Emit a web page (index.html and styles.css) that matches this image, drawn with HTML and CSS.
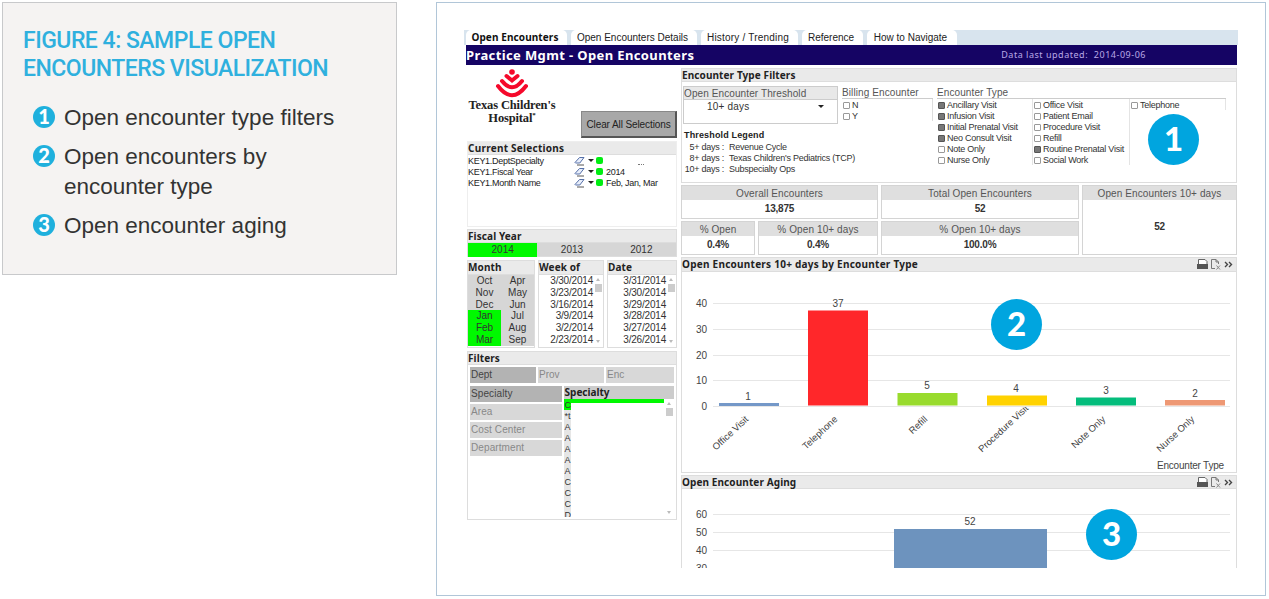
FILE: index.html
```
<!DOCTYPE html>
<html lang="en">
<head>
    <meta charset="UTF-8">
    <meta name="viewport" content="width=device-width, initial-scale=1.0">
    <title>Sample Open Encounters Visualization</title>
    <link rel="stylesheet" href="styles.css">
</head>
<body>
    <aside class="caption">
        <h1>Figure 4: Sample Open<br>Encounters Visualization</h1>
        <ol class="legend">
            <li><span class="dot">1</span><span>Open encounter type filters</span></li>
            <li><span class="dot">2</span><span>Open encounters by<br>encounter type</span></li>
            <li><span class="dot">3</span><span>Open encounter aging</span></li>
        </ol>
    </aside>

    <main class="frame">
        <div class="dashboard">
            <nav class="tabs">
                <span class="tab active">Open Encounters</span>
                <span class="tab details">Open Encounters Details</span>
                <span class="tab history">History / Trending</span>
                <span class="tab reference">Reference</span>
                <span class="tab navigate">How to Navigate</span>
            </nav>
            <header class="title-bar">
                <span class="title">Practice Mgmt - Open Encounters</span>
                <span class="updated">Data last updated:&nbsp; 2014-09-06</span>
            </header>

            <div class="columns">
                <!-- Left column -->
                <div class="side">
                    <div class="brand">
                        <div class="logo">
                            <svg width="34" height="29" viewBox="0 0 34 29" fill="none" stroke="#f5092b" stroke-width="4" stroke-linecap="round">
                                <circle cx="17" cy="3" r="2.8" fill="#f5092b" stroke="none"/>
                                <path d="M11.500 7L17 11.500L22.500 7"/>
                                <path d="M7 12Q17 24.500 27 12"/>
                                <path d="M3 17Q17 35.500 31 17"/>
                            </svg>
                            <div class="logo-text">Texas Children's<br>Hospital<sup>*</sup></div>
                        </div>
                        <button class="clear-button">Clear All Selections</button>
                    </div>

                    <section class="panel selections">
                        <h2>Current Selections</h2>
                        <div class="selection">
                            <span>KEY1.DeptSpecialty</span>
                            <svg class="eraser" width="12" height="10" viewBox="0 0 12 10"><path d="M1 6.500L5.500 1.500H10L5.800 7H1.500Z" fill="#e8eefb" stroke="#5670a8"/><path d="M3 9H10" stroke="#555"/></svg>
                            <i class="caret"></i><i class="green"></i><span></span>
                        </div>
                        <div class="selection">
                            <span>KEY1.Fiscal Year</span>
                            <svg class="eraser" width="12" height="10" viewBox="0 0 12 10"><path d="M1 6.500L5.500 1.500H10L5.800 7H1.500Z" fill="#e8eefb" stroke="#5670a8"/><path d="M3 9H10" stroke="#555"/></svg>
                            <i class="caret"></i><i class="green"></i><span>2014</span>
                        </div>
                        <div class="selection">
                            <span>KEY1.Month Name</span>
                            <svg class="eraser" width="12" height="10" viewBox="0 0 12 10"><path d="M1 6.500L5.500 1.500H10L5.800 7H1.500Z" fill="#e8eefb" stroke="#5670a8"/><path d="M3 9H10" stroke="#555"/></svg>
                            <i class="caret"></i><i class="green"></i><span>Feb, Jan, Mar</span>
                        </div>
                        <div class="specks"></div>
                    </section>

                    <section class="panel fiscal">
                        <h2>Fiscal Year</h2>
                        <div class="years"><span class="on">2014</span><span>2013</span><span>2012</span></div>
                    </section>

                    <div class="dates">
                        <section class="panel month">
                            <h2>Month</h2>
                            <div class="months">
                                <span>Oct</span><span>Apr</span>
                                <span>Nov</span><span>May</span>
                                <span>Dec</span><span>Jun</span>
                                <span class="on">Jan</span><span>Jul</span>
                                <span class="on">Feb</span><span>Aug</span>
                                <span class="on">Mar</span><span>Sep</span>
                            </div>
                        </section>
                        <section class="panel">
                            <h2>Week of</h2>
                            <div class="scroll-list">
                                <div class="days">3/30/2014<br>3/23/2014<br>3/16/2014<br>3/9/2014<br>3/2/2014<br>2/23/2014</div>
                                <div class="scrollbar"><i class="up"></i><i class="thumb"></i><i class="down"></i></div>
                            </div>
                        </section>
                        <section class="panel">
                            <h2>Date</h2>
                            <div class="scroll-list">
                                <div class="days">3/31/2014<br>3/30/2014<br>3/29/2014<br>3/28/2014<br>3/27/2014<br>3/26/2014</div>
                                <div class="scrollbar"><i class="up"></i><i class="thumb"></i><i class="down"></i></div>
                            </div>
                        </section>
                    </div>

                    <section class="panel filters">
                        <h2>Filters</h2>
                        <div class="filter-tabs"><span class="picked">Dept</span><span>Prov</span><span>Enc</span></div>
                        <div class="filter-body">
                            <div class="filter-list">
                                <span class="picked">Specialty</span><span>Area</span><span>Cost Center</span><span>Department</span>
                            </div>
                            <div class="specialty">
                                <h3>Specialty</h3>
                                <div class="scroll-list">
                                    <div class="letters"><b class="on">C</b><b>*t</b><b>A</b><b>A</b><b>A</b><b>A</b><b>A</b><b>C</b><b>C</b><b>C</b><b>D</b></div>
                                    <div class="selected-edge"></div>
                                    <div class="scrollbar"><i class="up"></i><i class="thumb"></i><i class="down"></i></div>
                                </div>
                            </div>
                        </div>
                    </section>
                </div>

                <!-- Right column -->
                <div class="content">
                    <section class="panel type-filters">
                        <h2>Encounter Type Filters</h2>
                        <div class="filter-row">
                            <div class="threshold-col">
                                <div class="threshold">
                                    <h3>Open Encounter Threshold</h3>
                                    <div class="select"><span>10+ days</span><i class="caret"></i></div>
                                </div>
                                <h4>Threshold Legend</h4>
                                <dl>
                                    <dt>5+ days :</dt><dd>Revenue Cycle</dd>
                                    <dt>8+ days :</dt><dd>Texas Children's Pediatrics (TCP)</dd>
                                    <dt>10+ days :</dt><dd>Subspecialty Ops</dd>
                                </dl>
                            </div>
                            <div class="billing">
                                <h3>Billing Encounter</h3>
                                <ul class="checks"><li>N</li><li>Y</li></ul>
                            </div>
                            <div class="types">
                                <h3>Encounter Type</h3>
                                <div class="type-cols">
                                    <ul class="checks">
                                        <li class="checked">Ancillary Visit</li>
                                        <li class="checked">Infusion Visit</li>
                                        <li class="checked">Initial Prenatal Visit</li>
                                        <li class="checked">Neo Consult Visit</li>
                                        <li>Note Only</li>
                                        <li>Nurse Only</li>
                                    </ul>
                                    <ul class="checks">
                                        <li>Office Visit</li>
                                        <li>Patient Email</li>
                                        <li>Procedure Visit</li>
                                        <li>Refill</li>
                                        <li class="checked">Routine Prenatal Visit</li>
                                        <li>Social Work</li>
                                    </ul>
                                    <ul class="checks"><li>Telephone</li></ul>
                                </div>
                            </div>
                        </div>
                        <span class="badge badge-1">1</span>
                    </section>

                    <div class="kpis">
                        <div class="kpi span-2"><h3>Overall Encounters</h3><b>13,875</b></div>
                        <div class="kpi"><h3>Total Open Encounters</h3><b>52</b></div>
                        <div class="kpi tall"><h3>Open Encounters 10+ days</h3><b>52</b></div>
                        <div class="kpi"><h3>% Open</h3><b>0.4%</b></div>
                        <div class="kpi"><h3>% Open 10+ days</h3><b>0.4%</b></div>
                        <div class="kpi"><h3>% Open 10+ days</h3><b>100.0%</b></div>
                    </div>

                    <section class="panel by-type">
                        <h2>Open Encounters 10+ days by Encounter Type
                            <svg class="tools" width="38" height="12" viewBox="0 0 38 12"><path d="M2.500 6V1.500H9L11 3.500V6" fill="#fff" stroke="#666"/><path d="M1 6H12V11H1Z" fill="#555"/><path d="M19 10.500H15.500V1.500H20L22.500 4V6M20 1.500V4H22.500" fill="none" stroke="#777"/><path d="M20.500 7.500L24 11.500M24 7.500L20.500 11.500" stroke="#888"/><path d="M29 4L31.500 6.500L29 9M33 4L35.500 6.500L33 9" fill="none" stroke="#444" stroke-width="1.400"/></svg>
                        </h2>
                        <svg class="chart" width="554" height="200" viewBox="0 0 554 200">
                            <clipPath id="below-axis"><rect x="0" y="135" width="554" height="65"/></clipPath>
                            <path class="grid" d="M31 31.500H548M31 57.500H548M31 83.500H548M31 108.500H548M31 134.500H548"/>
                            <g class="axis">
                                <text x="25" y="35">40</text>
                                <text x="25" y="61">30</text>
                                <text x="25" y="87">20</text>
                                <text x="25" y="112">10</text>
                                <text x="25" y="138">0</text>
                            </g>
                            <rect x="37" y="131" width="60" height="3" fill="#7498c8"/>
                            <rect x="126" y="38.500" width="60" height="95" fill="#ff272a"/>
                            <rect x="215.500" y="121" width="60" height="12.500" fill="#99db2d"/>
                            <rect x="305" y="123.500" width="60" height="10" fill="#ffd200"/>
                            <rect x="394" y="125.500" width="60" height="8" fill="#04bd7c"/>
                            <rect x="483" y="128" width="60" height="5.500" fill="#ee9874"/>
                            <g class="values">
                                <text x="66" y="128">1</text>
                                <text x="156" y="35">37</text>
                                <text x="245" y="117">5</text>
                                <text x="334" y="120">4</text>
                                <text x="424" y="122">3</text>
                                <text x="513" y="125">2</text>
                            </g>
                            <g class="labels" clip-path="url(#below-axis)">
                                <text transform="translate(67 148) rotate(-43)">Office Visit</text>
                                <text transform="translate(156 148) rotate(-43)">Telephone</text>
                                <text transform="translate(246 148) rotate(-43)">Refill</text>
                                <text transform="translate(347 137) rotate(-43)">Procedure Visit</text>
                                <text transform="translate(424 148) rotate(-43)">Note Only</text>
                                <text transform="translate(513 148) rotate(-43)">Nurse Only</text>
                            </g>
                            <text class="axis-title" x="542" y="197">Encounter Type</text>
                        </svg>
                        <span class="badge badge-2">2</span>
                    </section>

                    <section class="panel aging">
                        <h2>Open Encounter Aging
                            <svg class="tools" width="38" height="12" viewBox="0 0 38 12"><path d="M2.500 6V1.500H9L11 3.500V6" fill="#fff" stroke="#666"/><path d="M1 6H12V11H1Z" fill="#555"/><path d="M19 10.500H15.500V1.500H20L22.500 4V6M20 1.500V4H22.500" fill="none" stroke="#777"/><path d="M20.500 7.500L24 11.500M24 7.500L20.500 11.500" stroke="#888"/><path d="M29 4L31.500 6.500L29 9M33 4L35.500 6.500L33 9" fill="none" stroke="#444" stroke-width="1.400"/></svg>
                        </h2>
                        <svg class="chart" width="554" height="90" viewBox="0 0 554 90">
                            <path class="grid" d="M31 25.500H548M31 43.500H548M31 61.500H548"/>
                            <g class="axis">
                                <text x="25" y="29">60</text>
                                <text x="25" y="47">50</text>
                                <text x="25" y="65">40</text>
                                <text x="25" y="83">30</text>
                            </g>
                            <rect x="212" y="40" width="153" height="50" fill="#6d93be"/>
                            <g class="values"><text x="288" y="36">52</text></g>
                        </svg>
                        <span class="badge badge-3">3</span>
                    </section>
                </div>
            </div>
        </div>
    </main>
</body>
</html>
```
FILE: styles.css
```
*, *::before {
    box-sizing: border-box;
}

body {
    margin: 0;
    padding: 2px;
    display: flex;
    align-items: flex-start;
    gap: 39px;
    background: white;
    font-family: "Liberation Sans", Arial, sans-serif;
    color: #333;
}

h1, h2, h3, h4, ul, ol, dl, dd {
    margin: 0;
    padding: 0;
    font-weight: normal;
    list-style: none;
}

/* Caption card */
.caption {
    width: 395px;
    height: 273px;
    padding: 24px 20px;
    background: #f5f3f2;
    border: 1px solid #c8c9cb;
}

.caption h1 {
    font-family: Roboto, sans-serif;
    font-size: 23px;
    font-weight: 500;
    line-height: 28px;
    letter-spacing: -0.5px;
    white-space: nowrap;
    text-transform: uppercase;
    color: #2fb0de;
}

.legend {
    margin-top: 20px;
    padding-left: 10px;
    font-size: 22.5px;
    line-height: 30px;
}

.legend li {
    display: flex;
    gap: 9px;
    margin-bottom: 9px;
}

.dot {
    width: 22px;
    height: 22px;
    margin-top: 3px;
    border-radius: 50%;
    background: #1fb0dd;
    color: white;
    font: 900 20px/21px Lato, sans-serif;
    text-align: center;
}

/* Dashboard frame */
.frame {
    width: 830px;
    height: 594px;
    padding: 27px;
    background: white;
    border: 1px solid #b1c6d8;
}

.dashboard {
    width: 774px;
    height: 538px;
    overflow: hidden;
}

.tabs {
    display: flex;
    gap: 4px;
    height: 15px;
    padding-left: 2px;
    background: #d8e4ee;
    font-size: 10px;
    line-height: 15px;
    color: #222;
}

.tab {
    width: 126px;
    padding-right: 3px;
    text-align: center;
    white-space: nowrap;
    background: white;
    border-radius: 5px 5px 0 0;
}

.tab.active {
    width: 101px;
    font-family: "Noto Sans", sans-serif;
    font-weight: bold;
    letter-spacing: 0.1px;
    color: #111;
}

.tab.history {
    width: 97px;
    letter-spacing: 0.2px;
}

.tab.reference {
    width: 61px;
}

.tab.navigate {
    width: 90px;
}

.title-bar {
    display: flex;
    justify-content: space-between;
    height: 20px;
    margin: 0 1px 0 2px;
    background: #150464;
    color: white;
    font-family: "Noto Sans", sans-serif;
    line-height: 20px;
}

.title {
    font-size: 13px;
    font-weight: bold;
    letter-spacing: 0.38px;
}

.updated {
    margin-right: 91px;
    font-size: 9px;
    letter-spacing: 0.52px;
    color: #b9a9e6;
}

.columns {
    display: flex;
    gap: 4px;
    padding: 3px 1px 0 3px;
}

.side {
    width: 210px;
}

.content {
    width: 556px;
}

.panel {
    position: relative;
    border: 1px solid #ddd;
    font-size: 10px;
}

.panel h2 {
    height: 13px;
    background: #eaeaea;
    border-bottom: 1px solid #ddd;
    font: bold 10px/13px "Noto Sans", sans-serif;
    letter-spacing: 0.1px;
    white-space: nowrap;
    color: #222;
}

.on {
    background: #00f900;
}

.caret {
    width: 0;
    height: 0;
    border: 3px solid transparent;
    border-top-color: #222;
    border-bottom: 0;
}

/* Left column */
.brand {
    display: flex;
    justify-content: space-between;
    height: 73px;
}

.logo {
    width: 90px;
    text-align: center;
}

.logo svg {
    display: block;
    margin: 1px auto 1px 28px;
}

.logo-text {
    font: bold 12.5px/13px "Liberation Serif", serif;
    letter-spacing: -0.15px;
    white-space: nowrap;
    color: #222;
}

.logo-text sup {
    font-size: 7px;
    line-height: 0;
}

.clear-button {
    width: 96px;
    height: 27px;
    margin-top: 43px;
    padding: 0;
    background: #a8a8a8;
    border: 1px solid #888;
    border-right: 2px solid #555;
    border-bottom: 2px solid #555;
    font: 10px "Liberation Sans", sans-serif;
    letter-spacing: -0.1px;
    white-space: nowrap;
    color: #222;
}

.selections {
    height: 86px;
    margin-bottom: 2px;
    border-color: #eee;
}

.selections h2 {
    letter-spacing: 0.25px;
}

.selection {
    display: grid;
    grid-template-columns: 106px 14px 8px 10px auto;
    align-items: center;
    height: 11px;
    font-size: 9px;
    letter-spacing: -0.3px;
    white-space: nowrap;
    color: #222;
}

.green {
    width: 7px;
    height: 7px;
    border-radius: 2px;
    background: #00ee12;
}

.specks {
    position: absolute;
    left: 170px;
    top: 22px;
    width: 6px;
    border-top: 1px dotted #777;
}

.fiscal {
    height: 28px;
    margin-bottom: 3px;
}

.years {
    display: grid;
    grid-template-columns: repeat(3, 1fr);
    height: 13px;
    background: #d6d6d6;
    line-height: 14px;
    text-align: center;
}

.dates {
    display: grid;
    grid-template-columns: 68px 66px 70px;
    gap: 3px;
    height: 88px;
    margin-bottom: 3px;
}

.dates h2 {
    height: 14px;
}

.months {
    display: grid;
    grid-template-columns: 1fr 1fr;
    background: #d6d6d6;
    line-height: 11.8px;
    text-align: center;
}

.scroll-list {
    position: relative;
    display: flex;
}

.days {
    flex: 1;
    line-height: 11.8px;
    letter-spacing: -0.2px;
    text-align: right;
}

.scrollbar {
    display: flex;
    flex-direction: column;
    align-items: center;
    width: 10px;
    padding: 3px 0;
}

.scrollbar .up, .scrollbar .down {
    border: 2px solid transparent;
}

.scrollbar .up {
    border-top: 0;
    border-bottom: 3px solid #bbb;
}

.scrollbar .down {
    margin-top: auto;
    border-bottom: 0;
    border-top: 3px solid #bbb;
}

.thumb {
    width: 7px;
    height: 8px;
    margin-top: 3px;
    background: #ccc;
}

.filters {
    height: 169px;
}

.filter-tabs {
    display: grid;
    grid-template-columns: 66px 66px 68px;
    gap: 2px;
    margin: 2px;
    line-height: 16px;
    color: #888;
}

.filter-tabs span, .filter-list span {
    height: 16px;
    padding-left: 1px;
    background: #d8d8d8;
}

.filter-tabs .picked, .filter-list .picked {
    background: #b3b3b3;
    color: #444;
}

.filter-body {
    display: flex;
    gap: 2px;
    padding: 1px 2px;
}

.filter-list {
    display: flex;
    flex-direction: column;
    gap: 2px;
    width: 92px;
    line-height: 16px;
    letter-spacing: 0.1px;
    color: #888;
}

.specialty {
    width: 111px;
}

.specialty h3 {
    height: 13px;
    padding-left: 1px;
    background: #ccc;
    font: bold 10px/13px "Noto Sans", sans-serif;
    color: #222;
}

.specialty .scroll-list {
    justify-content: space-between;
    height: 118px;
    overflow: hidden;
}

.letters {
    width: 7px;
    background: #e6e6e6;
}

.letters b {
    display: block;
    height: 11px;
    overflow: hidden;
    padding-left: 1px;
    font-size: 9px;
    font-weight: normal;
    line-height: 12px;
}

.selected-edge {
    flex: 1;
    height: 4px;
    background: #00f900;
}

/* Encounter type filters */
.type-filters {
    height: 115px;
    margin-bottom: 2px;
}

.filter-row {
    display: flex;
    padding: 4px 1px;
}

.threshold-col {
    width: 155px;
    margin-right: 4px;
    font-size: 9px;
    white-space: nowrap;
}

.threshold {
    height: 38px;
    border: 1px solid #ccc;
}

.filter-row h3 {
    font-size: 10px;
    line-height: 14px;
    letter-spacing: 0.1px;
    white-space: nowrap;
    color: #555;
}

.threshold h3 {
    height: 13px;
    background: #e8e8e8;
    border-bottom: 1px solid #ccc;
}

.select {
    display: flex;
    justify-content: space-between;
    align-items: center;
    padding: 1px 13px 0 23px;
    font-size: 10px;
    letter-spacing: 0.2px;
}

.threshold-col h4 {
    margin: 5px 0 0 1px;
    font: bold 9px/13px "Liberation Sans", sans-serif;
    letter-spacing: 0.15px;
    color: #222;
}

.threshold-col dl {
    display: grid;
    grid-template-columns: 41px auto;
    column-gap: 5px;
    line-height: 11px;
    letter-spacing: -0.25px;
}

.threshold-col dt {
    text-align: right;
}

.billing {
    width: 91px;
    margin-right: 4px;
}

.billing h3, .types h3 {
    height: 13px;
    border-bottom: 1px solid #ccc;
}

.billing .checks {
    height: 22px;
    border-right: 1px solid #ddd;
}

.types {
    width: 289px;
}

.checks li {
    display: flex;
    align-items: center;
    gap: 2px;
    height: 11px;
    padding: 1px 0 0 1px;
    font-size: 9px;
    letter-spacing: -0.25px;
    white-space: nowrap;
}

.checks li::before {
    content: "";
    width: 7px;
    height: 7px;
    border: 1px solid #999;
    border-radius: 1px;
}

.checks .checked::before {
    background: #777;
    border-color: #555;
}

.type-cols {
    display: grid;
    grid-template-columns: 96px 97px 96px;
    align-items: start;
}

.type-cols .checks {
    border-right: 1px solid #e4e4e4;
}

/* KPI tiles */
.kpis {
    display: grid;
    grid-template-columns: 74px 120px 198px 155px;
    grid-template-rows: 34px 34px;
    gap: 2px 3px;
    margin-bottom: 2px;
}

.kpi {
    display: flex;
    flex-direction: column;
    border: 1px solid #d4d4d4;
    text-align: center;
}

.kpi h3 {
    height: 14px;
    background: #dfdfdf;
    font-size: 10px;
    line-height: 15px;
    letter-spacing: 0.1px;
    color: #555;
}

.kpi b {
    margin: auto;
    font-size: 10px;
    line-height: 12px;
    letter-spacing: -0.2px;
}

.span-2 {
    grid-column: span 2;
}

.tall {
    grid-row: span 2;
}

/* Charts */
.by-type {
    height: 216px;
    margin-bottom: 2px;
}

.by-type h2, .aging h2 {
    display: flex;
    justify-content: space-between;
    padding-right: 2px;
}

.by-type h2 {
    height: 14px;
    letter-spacing: 0.25px;
}

.chart {
    display: block;
}

.chart text {
    font-size: 10px;
    fill: #444;
}

.grid {
    stroke: #e6e6e6;
    fill: none;
}

.axis text, .labels text, .axis-title {
    text-anchor: end;
}

.values text {
    text-anchor: middle;
}

.chart .labels text {
    font-size: 9.5px;
}

.chart .axis-title {
    letter-spacing: -0.2px;
}

/* Numbered callouts */
.badge {
    position: absolute;
    width: 51px;
    height: 51px;
    border-radius: 50%;
    background: #00a5df;
    color: white;
    font: 900 33px/49px Lato, sans-serif;
    text-align: center;
}

.badge-1 {
    left: 466px;
    top: 45px;
}

.badge-2 {
    left: 309px;
    top: 41px;
}

.badge-3 {
    left: 404px;
    top: 33px;
}
```
